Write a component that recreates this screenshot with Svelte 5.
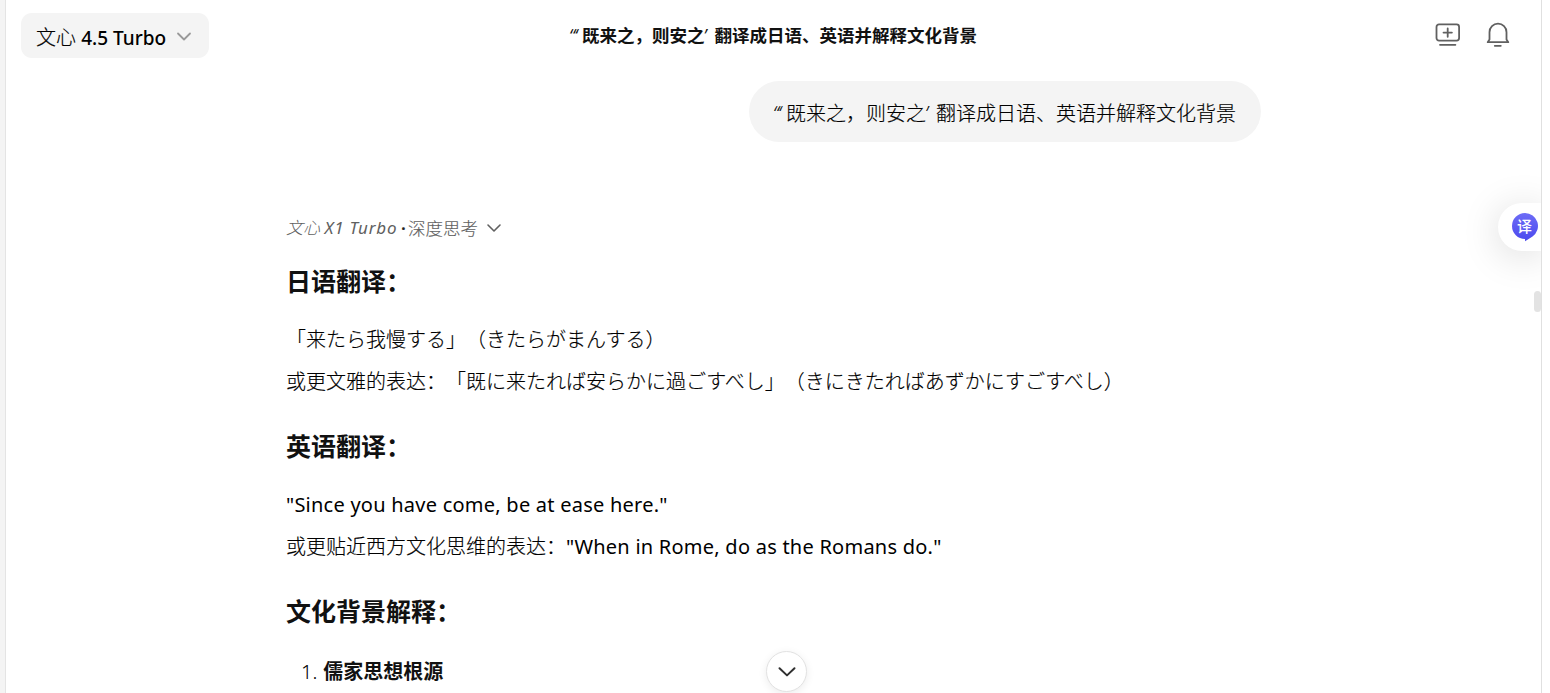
<script>
	const question = {
		open: '“‘',
		first: '既来之，则安之',
		close: '’',
		rest: '翻译成日语、英语并解释文化背景'
	};

	let sections = [
		{
			title: '日语翻译：',
			lines: [
				{ text: '「来たら我慢する」（きたらがまんする）' },
				{ text: '或更文雅的表达：「既に来たれば安らかに過ごすべし」（きにきたればあずかにすごすべし）' }
			]
		},
		{
			title: '英语翻译：',
			lines: [
				{ text: '', english: '"Since you have come, be at ease here."' },
				{ text: '或更贴近西方文化思维的表达：', english: '"When in Rome, do as the Romans do."' }
			]
		}
	];
</script>

<div class="page">
	<header>
		<button class="model">
			<span class="name">文心 <b>4.5 Turbo</b></span>
			<svg width="16" height="10" viewBox="0 0 16 10"><path d="M2 1.5 8 7.5 14 1.5" /></svg>
		</button>
		<h1><span class="quote">{question.open}</span>{question.first}<span class="quote close">{question.close}</span>{question.rest}</h1>
		<div class="actions">
			<svg width="26" height="26" viewBox="0 0 26 26">
				<rect x="1.5" y="2.4" width="22.6" height="16.2" rx="2.5" />
				<path d="M12.7 6.4v8.4M8.5 10.6h8.4M5 22.8h15.4" />
			</svg>
			<svg width="26" height="26" viewBox="0 0 26 26">
				<path d="M4.5 17.4V10.2a8.5 8.5 0 0 1 17 0V17.4L23.3 20.2H2.7zM9.8 23.8h6" />
			</svg>
		</div>
	</header>

	<main>
		<div class="bubble"><span class="quote">{question.open}</span>{question.first}<span class="quote close">{question.close}</span>{question.rest}</div>

		<div class="thinking">
			<span class="engine"><i>文心</i> <em>X1 Turbo</em></span>
			<span class="dot">·</span>
			<span>深度思考</span>
			<svg width="16" height="10" viewBox="0 0 16 10"><path d="M2 2 8 8 14 2" /></svg>
		</div>

		{#each sections as section}
			<h3>{section.title}</h3>
			<div class="lines">
				{#each section.lines as line}
					<p>{line.text}{#if line.english}<span class="english">{line.english}</span>{/if}</p>
				{/each}
			</div>
		{/each}

		<h3>文化背景解释：</h3>
		<div class="item"><span>1.</span><strong>儒家思想根源</strong></div>
	</main>

	<button class="down" aria-label="down">
		<svg width="20" height="14" viewBox="0 0 20 14"><path d="M2.5 3.2 10 10.4 17.5 3.2" /></svg>
	</button>

	<div class="translate">
		<svg width="28" height="30" viewBox="0 0 28 30">
			<defs>
				<linearGradient id="ball" x1="0" y1="0" x2="0" y2="1">
					<stop offset="0" stop-color="#6d6cf6" />
					<stop offset="1" stop-color="#4b49ee" />
				</linearGradient>
			</defs>
			<path d="M14 1a13 13 0 0 1 7.5 23.6Q18 27 14 29.2V27A13 13 0 0 1 14 1z" fill="url(#ball)" />
		</svg>
		<span>译</span>
	</div>
	<div class="thumb"></div>
</div>

<style>
:global(body) {
  background: #fff;
  overflow: hidden;
}
.page {
  position: relative;
  box-sizing: border-box;
  height: 693px;
  width: 1542px;
  border-left: 5px solid #f4f4f4;
  border-right: 1px solid #e0e0e0;
  box-shadow: inset 1px 0 #e4e4e4;
  overflow: hidden;
  color: #000;
  font: 300 20px/42px "Noto Sans", "Noto Sans CJK SC", sans-serif;
  text-spacing-trim: space-all;
  white-space: nowrap;
}
button {
  border: 0;
  padding: 0;
  font: inherit;
  color: inherit;
}
svg {
  display: block;
  fill: none;
  stroke: #606060;
  stroke-width: 1.8;
  stroke-linecap: round;
  stroke-linejoin: round;
}
header {
  display: grid;
  grid-template-columns: 1fr auto 1fr;
  align-items: start;
  height: 81px;
  padding: 0 15px 0 16px;
  box-sizing: border-box;
}
.model {
  display: flex;
  align-items: center;
  gap: 9px;
  width: 188px;
  height: 45px;
  margin-top: 13px;
  padding-left: 15px;
  background: #f4f4f4;
  border-radius: 11px;
  box-sizing: border-box;
  -webkit-text-stroke: 0.15px #000;
}
.model .name {
  width: 131px;
  text-align: left;
  padding-top: 5px;
}
.model b {
  font-weight: 500;
  font-size: 19px;
  -webkit-text-stroke: 0;
}
.model svg {
  margin-top: 2px;
  stroke: #999;
}
h1 {
  margin: 14px 0 0;
  font-size: 17.5px;
  line-height: 42px;
  font-weight: 700;
  color: #111;
}
.quote {
  display: inline-block;
  width: 12px;
  font-family: "Open Sans", sans-serif;
  font-style: italic;
  font-weight: 400;
  font-size: 1em;
  letter-spacing: -0.5px;
  text-indent: -1px;
}
.bubble .quote {
  font-weight: 300;
}
.quote.close {
  width: 10px;
}
.actions {
  display: flex;
  justify-content: flex-end;
  gap: 24px;
  padding: 22px 15px 0 0;
}
main {
  width: 974px;
  margin-left: 281px;
}
.bubble {
  position: relative;
  left: 1px;
  width: max-content;
  box-sizing: border-box;
  height: 61px;
  margin-left: auto;
  padding: 0 25px;
  line-height: 65px;
  border-radius: 31px;
  background: #f4f4f4;
  -webkit-text-stroke: 0.15px #000;
}
.thinking {
  display: flex;
  align-items: center;
  height: 30px;
  margin-top: 71px;
  font-size: 17.5px;
  line-height: 30px;
  color: #606060;
  -webkit-text-stroke: 0.15px #606060;
}
.engine {
  width: 115px;
  font-size: 17px;
  font-weight: 400;
  -webkit-text-stroke: 0;
}
.engine i {
  font-weight: 300;
}
.engine em {
  letter-spacing: 0.8px;
}
.dot {
  width: 7px;
  color: #222;
  font-weight: 600;
}
.thinking svg {
  margin-left: 8px;
  stroke-width: 1.6;
}
h3 {
  margin: 20px 0 0;
  height: 36px;
  font-size: 25px;
  line-height: 36px;
  font-weight: 700;
  color: #111;
}
.lines {
  margin-top: 20px;
  height: 89px;
}
p {
  margin: 0;
  height: 41.5px;
  -webkit-text-stroke: 0.15px #000;
}
.english {
  font-weight: 400;
  letter-spacing: 0.24px;
  -webkit-text-stroke: 0;
}
.item {
  display: flex;
  gap: 6px;
  margin-top: 22px;
  padding-left: 15px;
}
.item strong {
  color: #111;
  font-weight: 700;
}
.down {
  position: absolute;
  left: 761px;
  top: 651px;
  display: flex;
  align-items: center;
  justify-content: center;
  width: 41px;
  height: 41px;
  box-sizing: border-box;
  border: 1px solid #e2e2e2;
  border-radius: 50%;
  background: #fff;
  box-shadow: 0 2px 9px rgba(0, 0, 0, 0.08);
}
.down svg {
  stroke: #303030;
  stroke-width: 2;
}
.translate {
  position: absolute;
  right: 0;
  top: 203px;
  width: 43px;
  height: 48px;
  border-radius: 24px 0 0 24px;
  background: #fff;
  box-shadow: 0 5px 38px rgba(0, 0, 0, 0.15);
}
.translate svg {
  margin: 9px 0 0 13px;
  stroke: none;
}
.translate span {
  position: absolute;
  left: 19px;
  top: 11px;
  font-size: 15px;
  line-height: 24px;
  font-weight: 500;
  color: #fff;
}
.thumb {
  position: absolute;
  right: 0;
  top: 291px;
  width: 7px;
  height: 21px;
  border-radius: 4px;
  background: #e3e3e3;
}
</style>
